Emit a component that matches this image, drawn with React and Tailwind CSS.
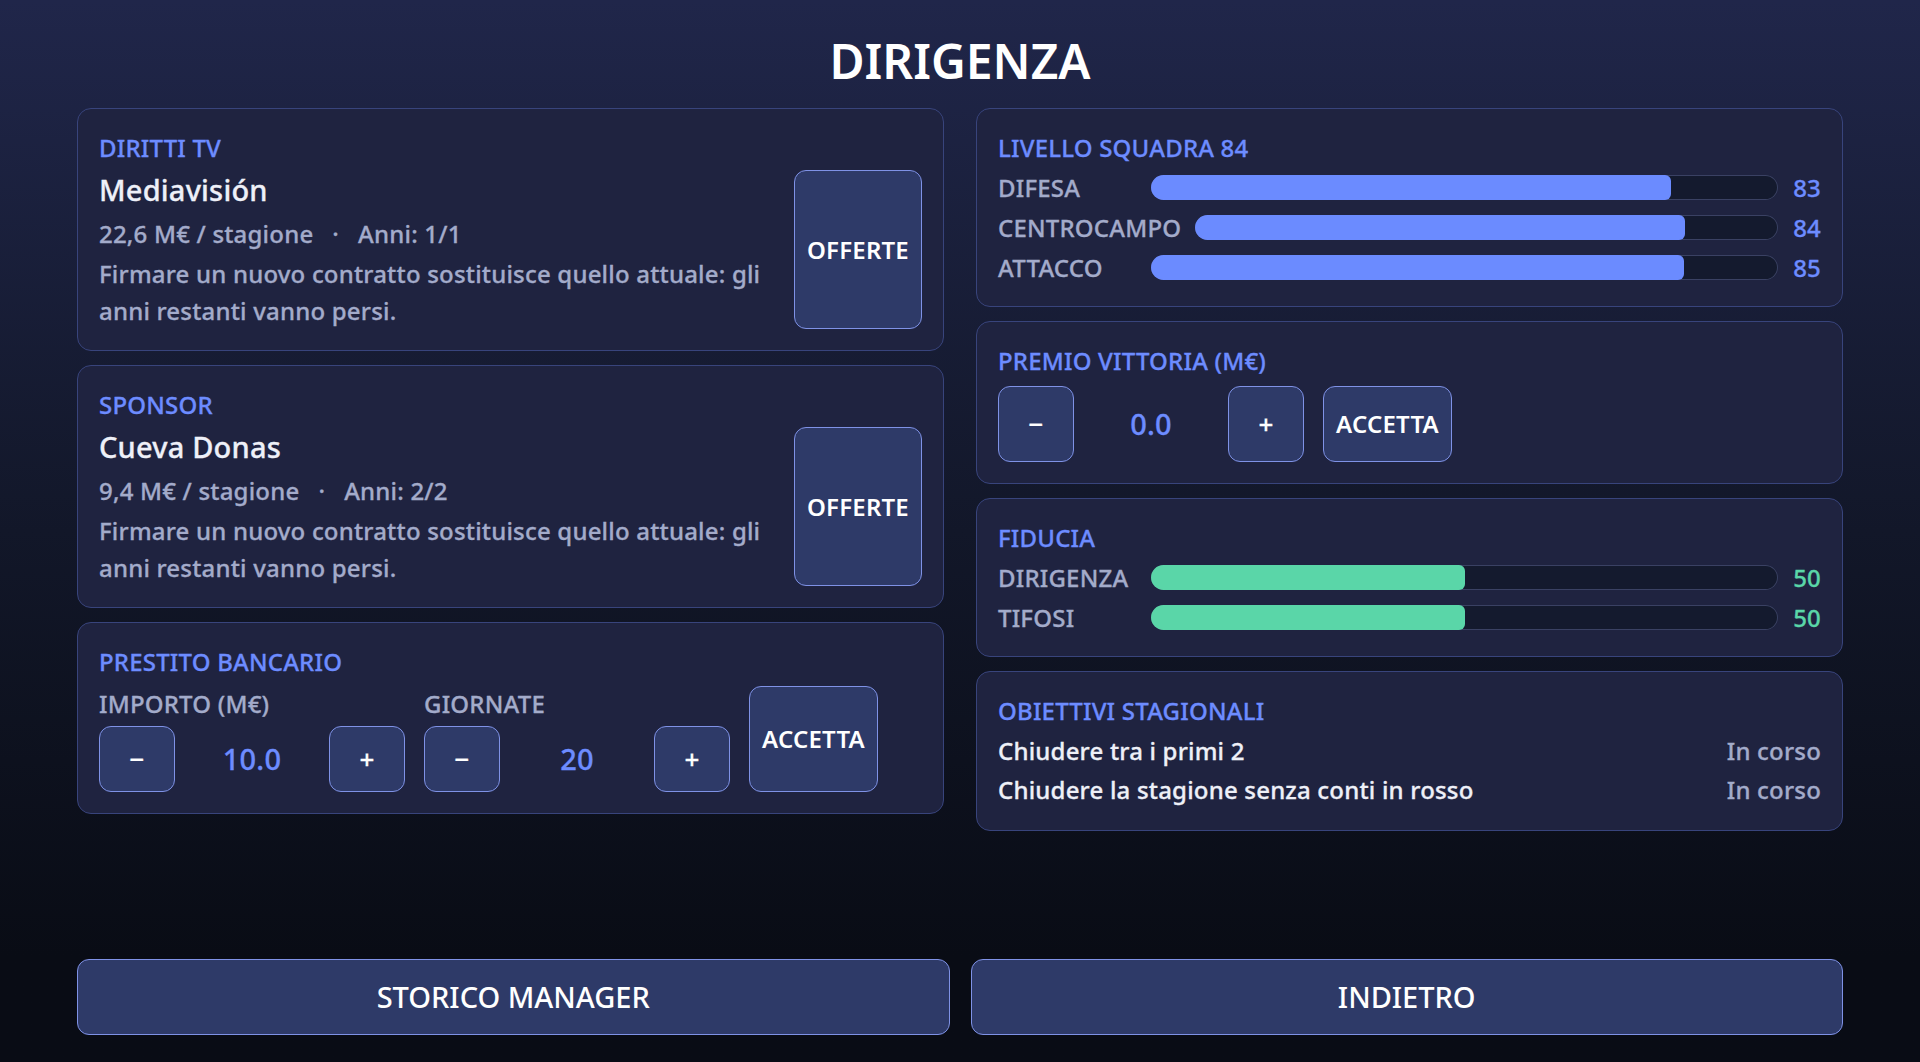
import React from 'react';

// shared class strings
const labelCls = 'text-[24px] leading-[36px] font-medium text-[#6d8cff] uppercase';
const subCls = 'text-[24px] leading-[36px] font-medium text-[#a3abca] uppercase';
const btnCls = 'rounded-[12px] border border-[#7f92e6] bg-[#2e3a68] text-white';
const noStroke = '[-webkit-text-stroke-width:0px]';

function Card({ children }) {
    return (
        <div className="rounded-[14px] border border-[#38447c] bg-[#1f2340] p-[21px]">
            {children}
        </div>
    );
}

function ContractCard({ label, name, amount, years }) {
    return (
        <Card>
            <div className={`${labelCls} mb-[4px]`}>{label}</div>
            <div className="flex gap-4">
                <div className="min-w-0 flex-1">
                    <div className="text-[29px] leading-[40px] font-medium text-[#eef0f8]">{name}</div>
                    <div className="mt-[5px] text-[24px] leading-[37px] font-medium text-[#a3abca]">
                        <span>{amount}</span>
                        <span className="mx-[19px]">·</span>
                        <span>{years}</span>
                    </div>
                    <div className="mt-[3px] text-[24px] leading-[37px] font-medium text-[#a3abca]">
                        Firmare un nuovo contratto sostituisce quello attuale: gli anni restanti vanno persi.
                    </div>
                </div>
                <button className={`${btnCls} ${noStroke} w-[128px] shrink-0 text-[24px] font-semibold`}>OFFERTE</button>
            </div>
        </Card>
    );
}

function StatRow({ name, value, green }) {
    return (
        <div className="flex h-[35px] items-center gap-[14px]">
            <div className="min-w-[139px] shrink-0 text-[24px] font-medium text-[#a3abca] uppercase">{name}</div>
            <div className="h-[25px] flex-1 overflow-hidden rounded-full bg-[#141a2e] shadow-[inset_0_0_0_1px_#3a4163]">
                <div
                    className={`h-full rounded-r-[6px] ${green ? 'bg-[#5ad6a8]' : 'bg-[#6b8bff]'}`}
                    style={{ width: `${value}%` }}
                />
            </div>
            <div className={`w-[29px] text-right text-[24px] font-medium ${green ? 'text-[#5ad6a8]' : 'text-[#6d8cff]'}`}>
                {value}
            </div>
        </div>
    );
}

function Stepper({ value, tall }) {
    const h = tall ? 'h-[76px]' : 'h-[66px]';
    return (
        <div className="flex items-center gap-[12px]">
            <button className={`${btnCls} ${h} w-[76px] text-[26px] font-medium`}>−</button>
            <div className="w-[130px] text-center text-[29px] font-medium text-[#6d8cff]">{value}</div>
            <button className={`${btnCls} ${h} w-[76px] text-[26px] font-medium`}>+</button>
        </div>
    );
}

export default function App() {
    return (
        <div className="flex min-h-screen flex-col bg-linear-to-b from-[#20264a] via-[#121729] via-50% to-[#090c15] to-90% px-[77px] pt-[31px] pb-[27px] font-['Noto_Sans','Open_Sans',sans-serif] tracking-[0.012em] [-webkit-text-stroke-width:0.3px]">
            <h1 className={`${noStroke} mb-[17px] text-center text-[48px] leading-[60px] font-semibold tracking-normal text-white`}>DIRIGENZA</h1>

            <div className="grid grid-cols-2 items-start gap-[32px]">
                <div className="flex flex-col gap-[14px]">
                    <ContractCard label="Diritti TV" name="Mediavisión" amount="22,6 M€ / stagione" years="Anni: 1/1" />
                    <ContractCard label="Sponsor" name="Cueva Donas" amount="9,4 M€ / stagione" years="Anni: 2/2" />

                    <Card>
                        <div className={`${labelCls} mb-[6px]`}>Prestito bancario</div>
                        <div className="flex gap-[19px]">
                            <div>
                                <div className={subCls}>Importo (M€)</div>
                                <div className="mt-[4px]">
                                    <Stepper value="10.0" />
                                </div>
                            </div>
                            <div>
                                <div className={subCls}>Giornate</div>
                                <div className="mt-[4px]">
                                    <Stepper value="20" />
                                </div>
                            </div>
                            <button className={`${btnCls} ${noStroke} w-[129px] text-[24px] font-semibold`}>ACCETTA</button>
                        </div>
                    </Card>
                </div>

                <div className="flex flex-col gap-[14px]">
                    <Card>
                        <div className={`${labelCls} mb-[4px]`}>Livello squadra 84</div>
                        <div className="flex flex-col gap-[5px]">
                            <StatRow name="Difesa" value={83} />
                            <StatRow name="Centrocampo" value={84} />
                            <StatRow name="Attacco" value={85} />
                        </div>
                    </Card>

                    <Card>
                        <div className={`${labelCls} mb-[7px]`}>Premio vittoria (M€)</div>
                        <div className="flex gap-[19px]">
                            <Stepper value="0.0" tall />
                            <button className={`${btnCls} ${noStroke} h-[76px] w-[129px] text-[24px] font-semibold`}>ACCETTA</button>
                        </div>
                    </Card>

                    <Card>
                        <div className={`${labelCls} mb-[4px]`}>Fiducia</div>
                        <div className="flex flex-col gap-[5px]">
                            <StatRow name="Dirigenza" value={50} green />
                            <StatRow name="Tifosi" value={50} green />
                        </div>
                    </Card>

                    <Card>
                        <div className={`${labelCls} mb-[3px]`}>Obiettivi stagionali</div>
                        <div className="flex flex-col gap-[1px] text-[24px] leading-[38px]">
                            <div className="flex justify-between">
                                <span className="font-medium text-[#eef0f8]">Chiudere tra i primi 2</span>
                                <span className="font-medium text-[#a3abca]">In corso</span>
                            </div>
                            <div className="flex justify-between">
                                <span className="font-medium text-[#eef0f8]">Chiudere la stagione senza conti in rosso</span>
                                <span className="font-medium text-[#a3abca]">In corso</span>
                            </div>
                        </div>
                    </Card>
                </div>
            </div>

            <div className="mt-auto grid grid-cols-2 gap-[21px]">
                <button className={`${btnCls} ${noStroke} h-[76px] text-[29px] font-medium tracking-normal`}>STORICO MANAGER</button>
                <button className={`${btnCls} ${noStroke} h-[76px] text-[29px] font-medium tracking-normal`}>INDIETRO</button>
            </div>
        </div>
    );
}
